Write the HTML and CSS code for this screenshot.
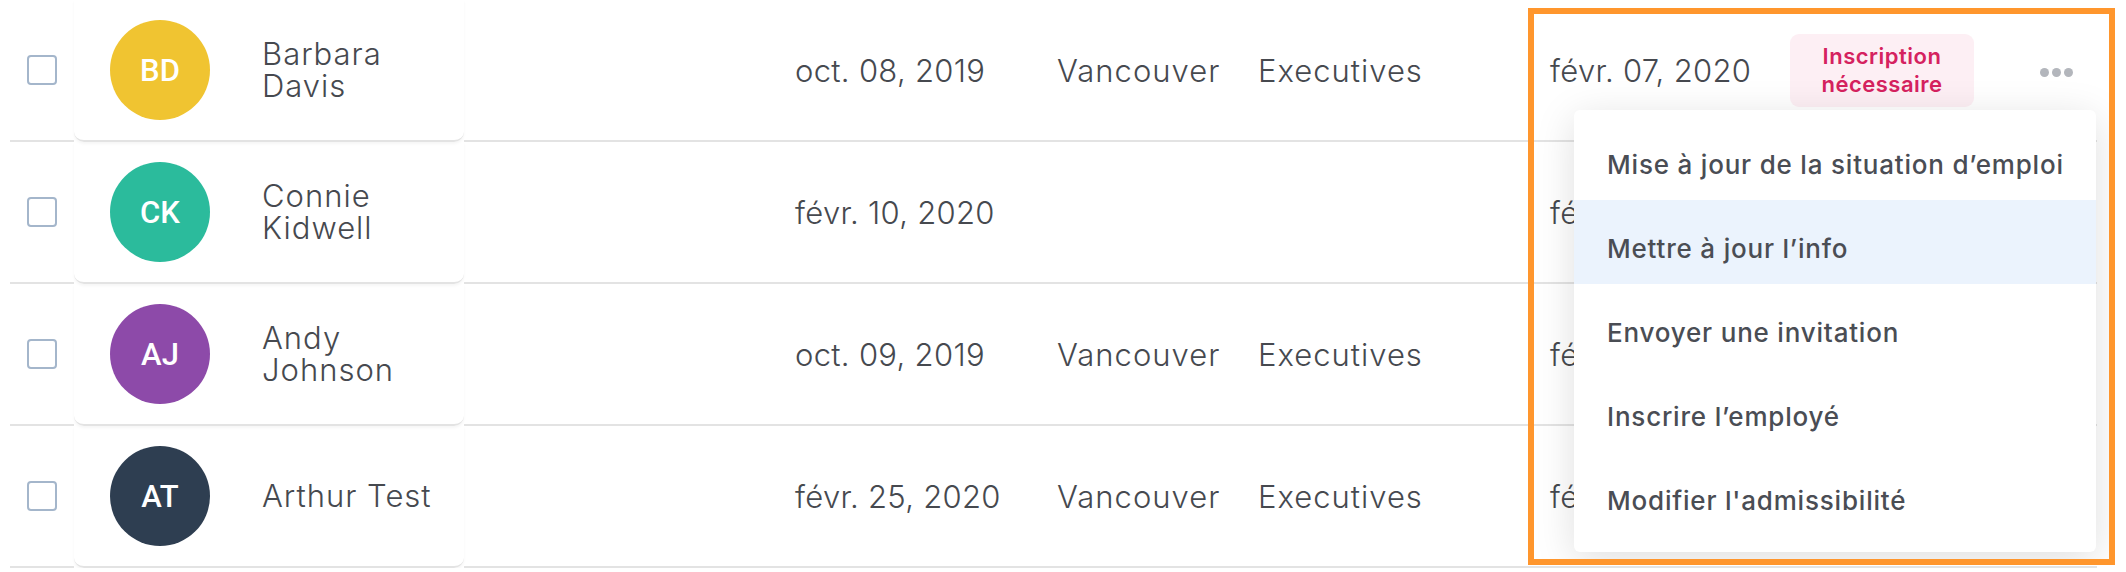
FILE: index.html
```html
<!DOCTYPE html>
<html lang="fr">
<head>
    <meta charset="UTF-8">
    <title>Employés</title>
    <link rel="stylesheet" href="styles.css">
</head>
<body>
    <div class="table">
        <div class="row">
            <div class="cell cell-check"><span class="checkbox"></span></div>
            <div class="cell name-card">
                <span class="avatar avatar-yellow">BD</span>
                <span class="name">Barbara<br>Davis</span>
            </div>
            <div class="cell cell-date date">oct. 08, 2019</div>
            <div class="cell">Vancouver</div>
            <div class="cell">Executives</div>
            <div class="cell date">févr. 07, 2020</div>
            <div class="cell"><span class="badge">Inscription nécessaire</span></div>
            <div class="cell"><span class="dots"><i></i><i></i><i></i></span></div>
        </div>
        <div class="row">
            <div class="cell cell-check"><span class="checkbox"></span></div>
            <div class="cell name-card">
                <span class="avatar avatar-green">CK</span>
                <span class="name">Connie<br>Kidwell</span>
            </div>
            <div class="cell cell-date date">févr. 10, 2020</div>
            <div class="cell"></div>
            <div class="cell"></div>
            <div class="cell date">févr. 10, 2020</div>
            <div class="cell"></div>
            <div class="cell"></div>
        </div>
        <div class="row">
            <div class="cell cell-check"><span class="checkbox"></span></div>
            <div class="cell name-card">
                <span class="avatar avatar-purple">AJ</span>
                <span class="name">Andy<br>Johnson</span>
            </div>
            <div class="cell cell-date date">oct. 09, 2019</div>
            <div class="cell">Vancouver</div>
            <div class="cell">Executives</div>
            <div class="cell date">févr. 07, 2020</div>
            <div class="cell"></div>
            <div class="cell"></div>
        </div>
        <div class="row">
            <div class="cell cell-check"><span class="checkbox"></span></div>
            <div class="cell name-card">
                <span class="avatar avatar-navy">AT</span>
                <span class="name">Arthur Test</span>
            </div>
            <div class="cell cell-date date">févr. 25, 2020</div>
            <div class="cell">Vancouver</div>
            <div class="cell">Executives</div>
            <div class="cell date">févr. 25, 2020</div>
            <div class="cell"></div>
            <div class="cell"></div>
        </div>
    </div>

    <div class="highlight">
        <ul class="menu">
            <li>Mise à jour de la situation d’emploi</li>
            <li class="active">Mettre à jour l’info</li>
            <li>Envoyer une invitation</li>
            <li>Inscrire l’employé</li>
            <li>Modifier l'admissibilité</li>
        </ul>
    </div>
</body>
</html>
```

FILE: styles.css
```css
body {
    margin: 0;
    background: #fff;
    font-family: Inter, "Open Sans", sans-serif;
    color: #46494f;
}
.table {
    margin-left: 10px;
    width: 2087px;
}
.row {
    display: grid;
    grid-template-columns: 64px 390px 593px 201px 292px 240px 250px 57px;
}
.cell {
    display: flex;
    align-items: center;
    height: 140px;
    border-bottom: 2px solid #e3e3e3;
    font-size: 31px;
    font-weight: 300;
    letter-spacing: 1px;
    white-space: nowrap;
}
.date {
    letter-spacing: 0.3px;
}
.cell-check {
    justify-content: center;
}
.checkbox {
    width: 26px;
    height: 26px;
    border: 2px solid #a4b6cb;
    border-radius: 4px;
}
.name-card {
    border-radius: 0 0 10px 10px;
    box-shadow: 0 2px 3px rgba(0, 0, 0, 0.04);
    padding-left: 36px;
}
.avatar {
    width: 100px;
    height: 100px;
    border-radius: 50%;
    display: flex;
    align-items: center;
    justify-content: center;
    color: #fff;
    font-family: Roboto, "Liberation Sans", sans-serif;
    font-size: 31px;
    font-weight: 500;
    letter-spacing: 0;
    margin-right: 52px;
}
.avatar-yellow { background: #f0c431; }
.avatar-green { background: #2bbb9c; }
.avatar-purple { background: #8d4aa9; }
.avatar-navy { background: #2e3e51; }
.name {
    line-height: 32px;
}
.cell-date {
    padding-left: 331px;
}
.badge {
    width: 184px;
    height: 73px;
    border-radius: 9px;
    background: #fdeff4;
    color: #d5225f;
    font-size: 22px;
    font-weight: 600;
    letter-spacing: 0.5px;
    line-height: 28px;
    white-space: normal;
    text-align: center;
    display: flex;
    align-items: center;
    justify-content: center;
}
.dots {
    display: flex;
    gap: 3px;
    margin-bottom: -4px;
}
.dots i {
    width: 9px;
    height: 9px;
    border-radius: 50%;
    background: #b3b6bc;
}
.highlight {
    position: absolute;
    left: 1528px;
    top: 8px;
    width: 587px;
    height: 557px;
    box-sizing: border-box;
    border: 6px solid #ff962d;
    overflow: hidden;
}
.menu {
    position: absolute;
    left: 40px;
    top: 96px;
    width: 522px;
    height: 442px;
    box-sizing: border-box;
    margin: 0;
    padding: 6px 0 0;
    list-style: none;
    background: #fff;
    border-radius: 6px;
    box-shadow: 0 8px 40px rgba(0, 0, 0, 0.13);
}
.menu li {
    height: 84px;
    box-sizing: border-box;
    padding: 12px 0 0 33px;
    display: flex;
    align-items: center;
    font-size: 26px;
    font-weight: 500;
    letter-spacing: 0.8px;
    color: #4a4d54;
    white-space: nowrap;
}
.menu li.active {
    background: #ebf3fd;
}
```
